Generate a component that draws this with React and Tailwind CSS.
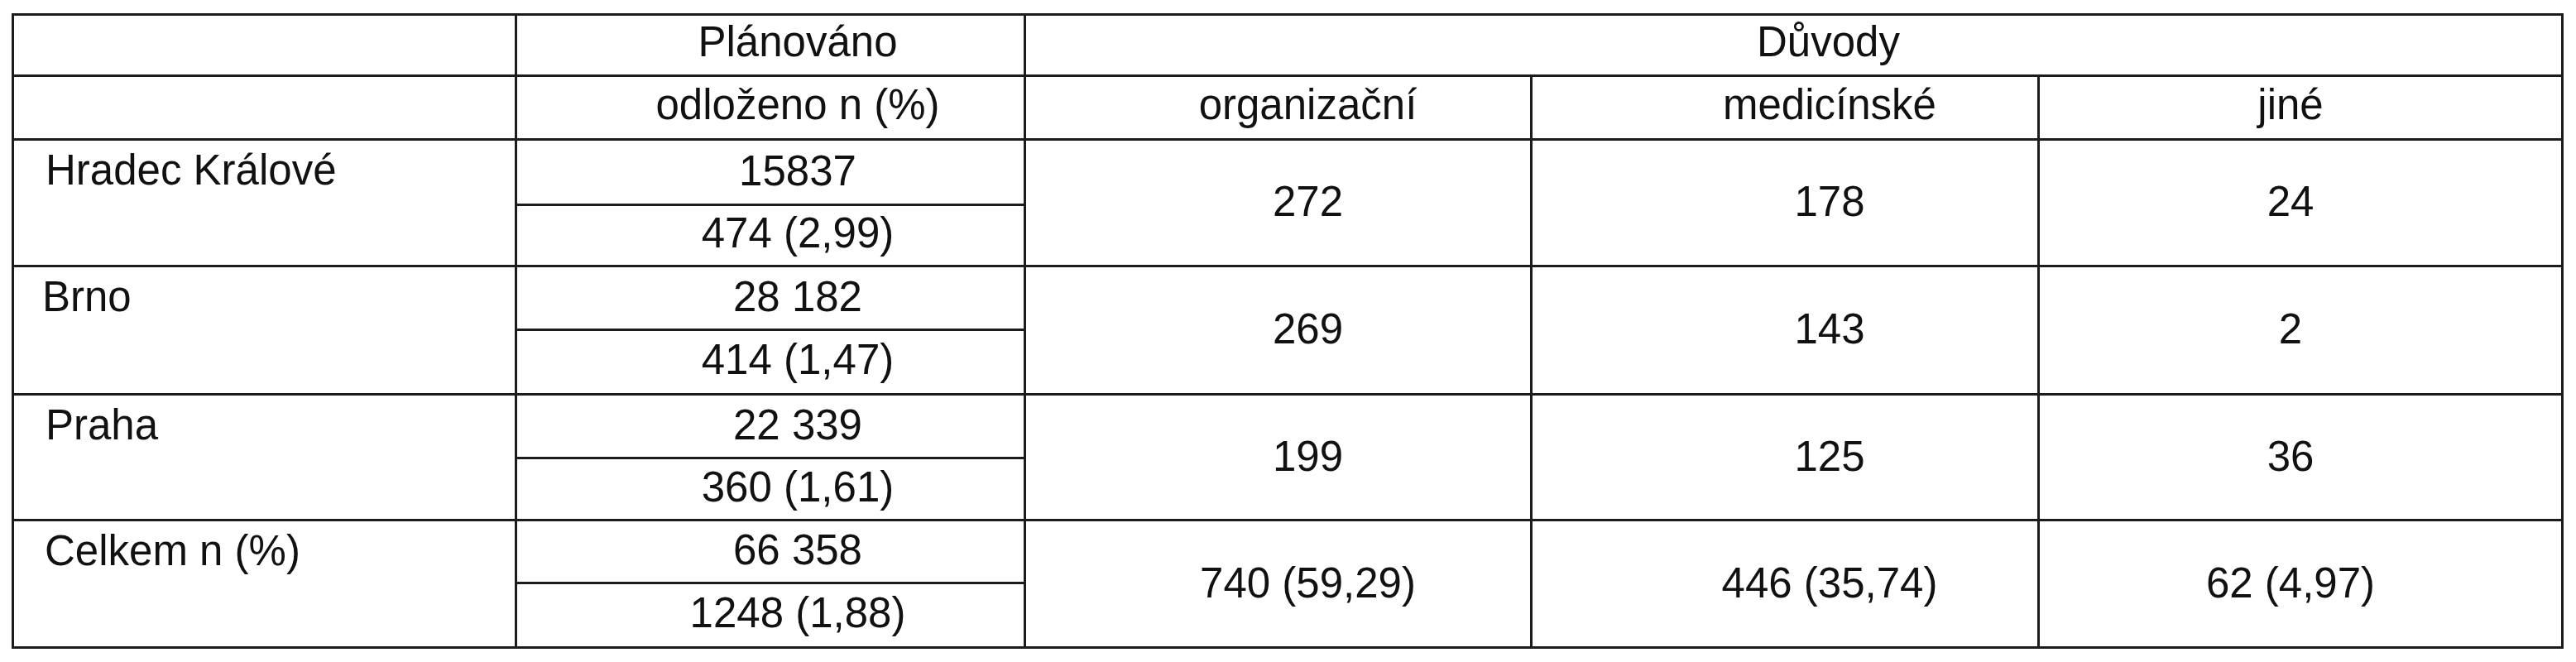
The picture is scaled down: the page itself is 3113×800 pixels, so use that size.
import React from 'react';

const rows = [
  { name: 'Hradec Králové', pl: 'pl-[38px]', plan: '15837', odl: '474 (2,99)', org: '272', med: '178', jine: '24', h1: 'h-[79px]', h2: 'h-[74px]' },
  { name: 'Brno', pl: 'pl-[34px]', plan: '28 182', odl: '414 (1,47)', org: '269', med: '143', jine: '2', h1: 'h-[77px]', h2: 'h-[78px]' },
  { name: 'Praha', pl: 'pl-[38px]', plan: '22 339', odl: '360 (1,61)', org: '199', med: '125', jine: '36', h1: 'h-[77px]', h2: 'h-[75px]' },
  { name: 'Celkem n (%)', pl: 'pl-[37px]', plan: '66 358', odl: '1248 (1,88)', org: '740 (59,29)', med: '446 (35,74)', jine: '62 (4,97)', h1: 'h-[76px]', h2: 'h-[78px]' },
];

// shared cell border
const cell = 'border-solid border-[3px] border-[#1c1c1c] p-0';

export default function App(){
  return (
    <div className="w-[3113px] h-[800px] bg-white pt-[16px] pl-[14px]">
      <table className="table-fixed border-collapse w-[3081px] font-['Liberation_Sans',Arial,sans-serif] text-[51px] leading-[57px] text-[#111]">
        <colgroup>
          <col className="w-[608px]" />
          <col className="w-[615px]" />
          <col className="w-[612px]" />
          <col className="w-[613px]" />
          <col className="w-[633px]" />
        </colgroup>
        <tbody>
          <tr className="h-[74px]">
            <td className={cell}></td>
            <td className={`${cell} text-center align-middle pl-[66px] pb-[8px]`}>Plánováno</td>
            <td colSpan={3} className={`${cell} text-center align-middle pl-[84px] pb-[8px]`}>Důvody</td>
          </tr>
          <tr className="h-[77px]">
            <td className={cell}></td>
            <td className={`${cell} text-center align-middle pl-[66px] pb-[8px]`}>odloženo n (%)</td>
            <td className={`${cell} text-center align-middle pl-[72px] pb-[8px]`}>organizační</td>
            <td className={`${cell} text-center align-middle pl-[108px] pb-[8px]`}>medicínské</td>
            <td className={`${cell} text-center align-middle pr-[24px] pb-[8px]`}>jiné</td>
          </tr>
          {rows.map(r => (
            <React.Fragment key={r.name}>
              <tr className={r.h1}>
                <td rowSpan={2} className={`${cell} align-top text-left pt-[7px] ${r.pl}`}>{r.name}</td>
                <td className={`${cell} text-center align-middle pl-[66px] pb-[4px]`}>{r.plan}</td>
                <td rowSpan={2} className={`${cell} text-center align-middle pl-[72px] pb-[3px]`}>{r.org}</td>
                <td rowSpan={2} className={`${cell} text-center align-middle pl-[108px] pb-[3px]`}>{r.med}</td>
                <td rowSpan={2} className={`${cell} text-center align-middle pr-[24px] pb-[3px]`}>{r.jine}</td>
              </tr>
              <tr className={r.h2}>
                <td className={`${cell} text-center align-middle pl-[66px] pb-[6px]`}>{r.odl}</td>
              </tr>
            </React.Fragment>
          ))}
        </tbody>
      </table>
    </div>
  );
}
